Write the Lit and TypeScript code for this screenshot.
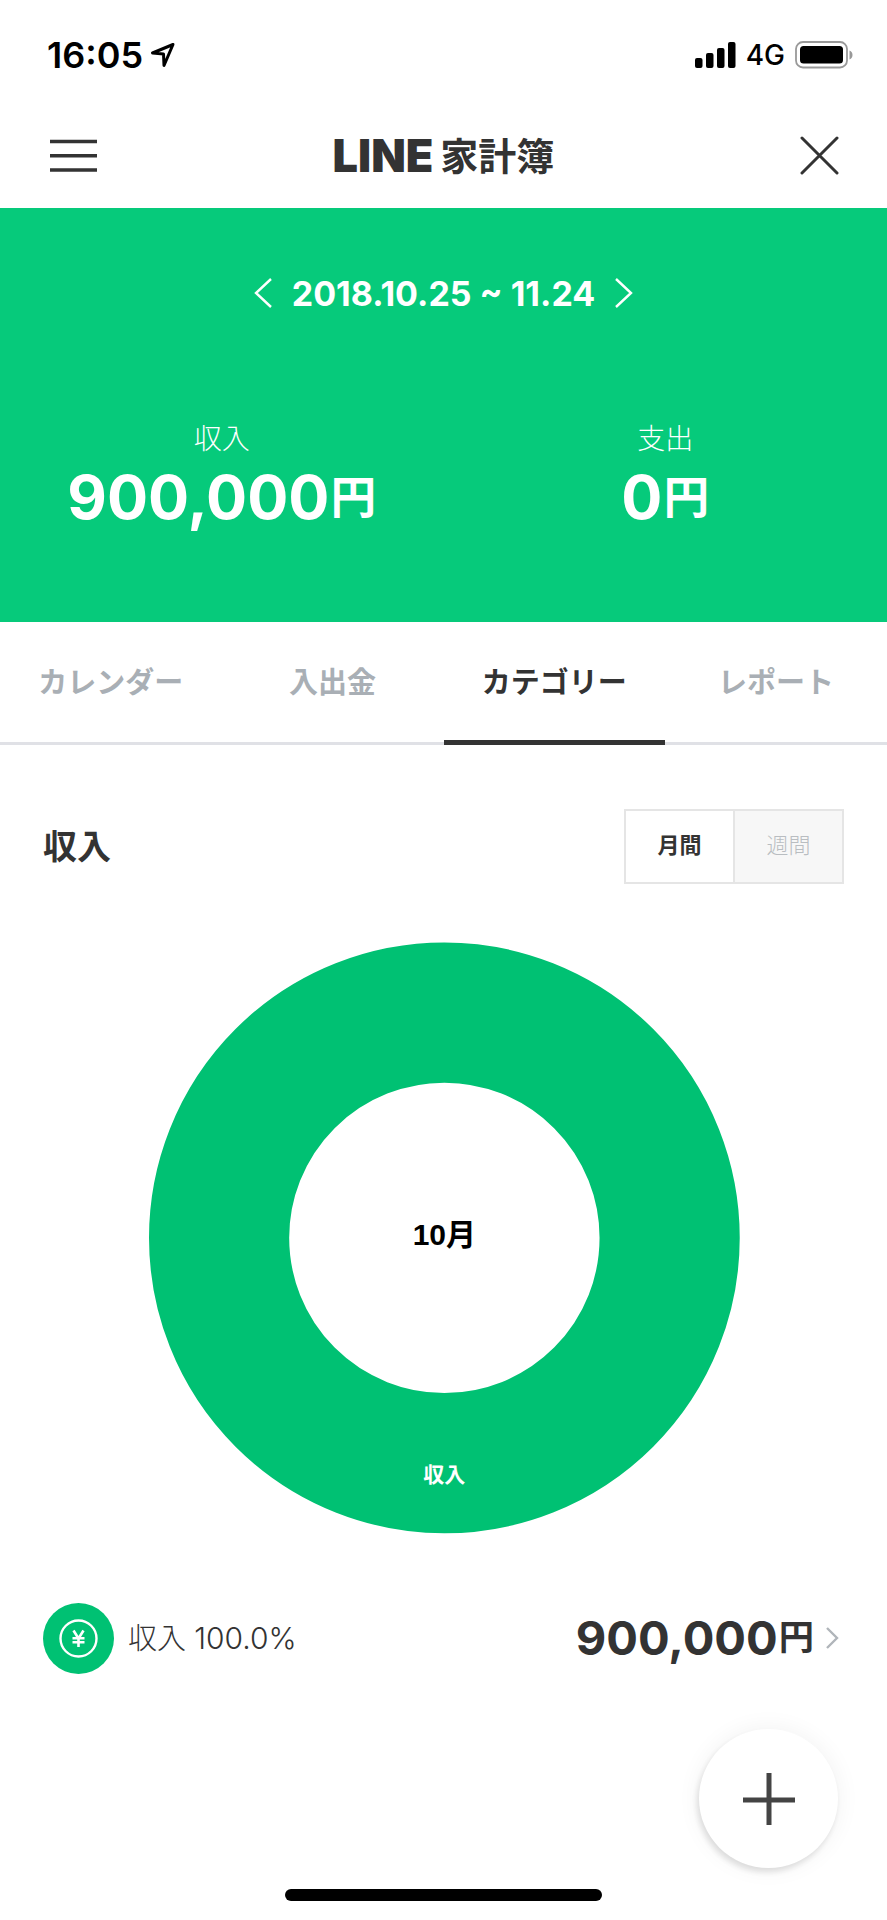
import { LitElement, html, css, svg } from "lit";
import { customElement, property, state } from "lit/decorators.js";
import { classMap } from "lit/directives/class-map.js";

const CHART_GREEN = "#00c173";

/** Amount of money with a smaller yen unit after it. */
@customElement("yen-amount")
export class YenAmount extends LitElement {
  @property({ type: Number }) value = 0;

  static styles = css`
    :host {
      display: block;
      white-space: nowrap;
    }
    .unit {
      margin-left: 1px;
      font-size: 0.75em;
      font-weight: 700;
      line-height: 1;
      vertical-align: 5px;
    }
  `;

  render() {
    return html`${this.value.toLocaleString("en-US")}<span class="unit">円</span>`;
  }
}

/** Ring chart of one month, with a single category filling it. */
@customElement("category-donut")
export class CategoryDonut extends LitElement {
  @property() month = "";
  @property() label = "";

  static styles = css`
    :host {
      display: block;
    }
    svg {
      display: block;
      width: 100%;
      height: auto;
    }
    .month {
      font: 700 30px "Liberation Sans", "Noto Sans CJK JP", sans-serif;
      fill: #000;
    }
    .label {
      font: 700 21px "Noto Sans CJK JP", sans-serif;
      fill: #fff;
    }
  `;

  render() {
    return html`<svg viewBox="0 0 592 592" role="img" aria-label=${this.month + " " + this.label}>
      ${svg`
        <circle cx="297" cy="295.500" r="225" fill="none" stroke=${CHART_GREEN} stroke-width="140"></circle>
        <text class="month" x="297" y="303" text-anchor="middle">${this.month}</text>
        <text class="label" x="297" y="539" text-anchor="middle">${this.label}</text>
      `}
    </svg>`;
  }
}

@customElement("app-root")
export class AppRoot extends LitElement {
  @state() private tab = "カテゴリー";
  @state() private span = "月間";

  private tabs = ["カレンダー", "入出金", "カテゴリー", "レポート"];
  private spans = ["月間", "週間"];

  static styles = css`
    :host {
      display: flex;
      flex-direction: column;
      position: relative;
      min-height: 100vh;
      box-sizing: border-box;
      background: #fff;
      color: #333;
      font-family: Inter, "Noto Sans CJK JP", sans-serif;
    }
    svg {
      display: block;
      flex: none;
    }
    button {
      margin: 0;
      padding: 0;
      border: 0;
      background: none;
      color: inherit;
      font: inherit;
      cursor: pointer;
    }
    h1,
    h2,
    dl,
    dd {
      margin: 0;
    }

    .status {
      display: flex;
      align-items: center;
      justify-content: space-between;
      height: 98px;
      padding: 6px 33px 0 47px;
      color: #000;
    }
    .clock {
      display: flex;
      align-items: center;
      gap: 7px;
      font-size: 36px;
      font-weight: 600;
    }
    .signals {
      display: flex;
      align-items: center;
      gap: 10px;
      font-size: 28px;
      font-weight: 500;
    }

    .bar {
      display: grid;
      grid-template-columns: 1fr auto 1fr;
      align-items: center;
      height: 104px;
      padding: 0 48px;
    }
    .logo {
      display: flex;
      align-items: center;
      gap: 7px;
      font-size: 38px;
      font-weight: 700;
      line-height: 48px;
    }
    .brand {
      font-size: 45px;
      font-weight: 900;
    }
    .close {
      justify-self: end;
    }
    .menu {
      justify-self: start;
    }

    .summary {
      background: #06ca7b;
      color: #fff;
      padding: 53px 0 85px;
    }
    .period {
      display: flex;
      align-items: center;
      justify-content: center;
      gap: 20px;
      height: 64px;
      font-size: 34px;
      font-weight: 700;
    }
    .totals {
      display: grid;
      grid-template-columns: 1fr 1fr;
      margin-top: 96px;
      text-align: center;
    }
    .totals dt {
      font-size: 28px;
      font-weight: 300;
      line-height: 36px;
    }
    .totals dd {
      font-size: 61px;
      font-weight: 700;
      line-height: 80px;
    }

    .tabs {
      display: grid;
      grid-template-columns: repeat(4, 1fr);
      height: 123px;
      box-shadow: inset 0 -3px #e0e1e6;
    }
    .tab {
      padding-bottom: 2px;
      border-bottom: 5px solid transparent;
      color: #a9afb5;
      font-size: 29px;
      font-weight: 700;
    }
    .tab.active {
      border-color: #333;
      color: #333;
    }

    .content {
      padding: 64px 43px 0;
    }
    .head {
      display: flex;
      align-items: center;
      justify-content: space-between;
    }
    .head h2 {
      font-size: 34px;
      font-weight: 700;
      line-height: 48px;
    }
    .toggle {
      display: grid;
      grid-template-columns: 1fr 1fr;
      gap: 2px;
      width: 216px;
      height: 71px;
      border: 2px solid #e5e5e5;
      background: #e5e5e5;
    }
    .span {
      padding-bottom: 8px;
      background: #f7f7f7;
      color: #b9bdc1;
      font-size: 22px;
      font-weight: 300;
    }
    .span.active {
      background: #fff;
      color: #333;
      font-weight: 700;
    }
    .chart {
      width: 74%;
      margin: 58px auto 0;
    }
    .row {
      display: flex;
      align-items: center;
      width: 100%;
      margin-top: 68px;
      padding-right: 5px;
      text-align: left;
    }
    .name {
      flex: 1;
      margin-left: 14px;
      padding-bottom: 4px;
      font-size: 29px;
      font-weight: 300;
    }
    .share {
      font-size: 30px;
    }
    .sum {
      margin-right: 12px;
      font-size: 47px;
      font-weight: 700;
      line-height: 64px;
    }

    .add {
      display: grid;
      place-items: center;
      position: fixed;
      right: 49px;
      bottom: 52px;
      width: 139px;
      height: 139px;
      border-radius: 50%;
      background: #fff;
      box-shadow: 0 0 24px rgba(0, 0, 0, 0.06), -2px 4px 6px rgba(0, 0, 0, 0.12);
    }
    .home {
      width: 317px;
      height: 12px;
      margin: auto auto 19px;
      border-radius: 6px;
      background: #000;
    }
  `;

  private chevron(width: number, height: number, dir: "left" | "right", color: string) {
    const points =
      dir === "left"
        ? `${width - 1},1 2,${height / 2} ${width - 1},${height - 1}`
        : `1,1 ${width - 2},${height / 2} 1,${height - 1}`;
    return html`<svg width=${width} height=${height} viewBox="0 0 ${width} ${height}" fill="none"
      stroke=${color} stroke-width="2.4" aria-hidden="true">
      <polyline points=${points}></polyline>
    </svg>`;
  }

  render() {
    return html`
      <div class="status">
        <div class="clock">
          <span>16:05</span>
          <svg width="25" height="26" viewBox="0 0 25 26" fill="none" stroke="#000"
            stroke-width="3" stroke-linejoin="round">
            <path d="M23 2.500 2.500 11 13.500 12 14 23.500Z"></path>
          </svg>
        </div>
        <div class="signals">
          <svg width="41" height="26" viewBox="0 0 41 26" fill="#000">
            <rect x="0" y="16" width="7.500" height="10" rx="2"></rect>
            <rect x="11" y="11" width="7.500" height="15" rx="2"></rect>
            <rect x="22" y="6" width="7.500" height="20" rx="2"></rect>
            <rect x="33" y="0" width="7.500" height="26" rx="2"></rect>
          </svg>
          <span>4G</span>
          <svg width="59" height="28" viewBox="0 0 59 28">
            <rect x="1" y="1" width="51" height="25.500" rx="7" fill="none" stroke="#999" stroke-width="1.800"></rect>
            <rect x="5" y="5" width="43" height="17.500" rx="3.500" fill="#000"></rect>
            <path d="M54.500 9.500c4 1.500 4 7.500 0 9Z" fill="#999"></path>
          </svg>
        </div>
      </div>

      <header class="bar">
        <button class="menu" aria-label="メニュー">
          <svg width="51" height="34" viewBox="0 0 51 34" stroke="#333" stroke-width="3.600">
            <path d="M2 2.500h47M2 16.700h47M2 31h47"></path>
          </svg>
        </button>
        <h1 class="logo"><span class="brand">LINE</span><span>家計簿</span></h1>
        <button class="close" aria-label="閉じる">
          <svg width="40" height="40" viewBox="0 0 40 40" stroke="#333" stroke-width="3" stroke-linecap="round">
            <path d="M3 2 38 37M38 2 3 37"></path>
          </svg>
        </button>
      </header>

      <section class="summary">
        <div class="period">
          <button aria-label="前の期間">${this.chevron(18, 30, "left", "#fff")}</button>
          <span>2018.10.25 ~ 11.24</span>
          <button aria-label="次の期間">${this.chevron(18, 30, "right", "#fff")}</button>
        </div>
        <div class="totals">
          <dl>
            <dt>収入</dt>
            <dd><yen-amount .value=${900000}></yen-amount></dd>
          </dl>
          <dl>
            <dt>支出</dt>
            <dd><yen-amount .value=${0}></yen-amount></dd>
          </dl>
        </div>
      </section>

      <nav class="tabs">
        ${this.tabs.map(
          (name) => html`<button
            class=${classMap({ tab: true, active: name === this.tab })}
            @click=${() => (this.tab = name)}
          >${name}</button>`
        )}
      </nav>

      <main class="content">
        <div class="head">
          <h2>収入</h2>
          <div class="toggle">
            ${this.spans.map(
              (name) => html`<button
                class=${classMap({ span: true, active: name === this.span })}
                aria-pressed=${name === this.span}
                @click=${() => (this.span = name)}
              >${name}</button>`
            )}
          </div>
        </div>

        <category-donut class="chart" month="10月" label="収入"></category-donut>

        <button class="row">
          <svg width="71" height="71" viewBox="0 0 71 71" fill="none" stroke="#fff" aria-hidden="true">
            <circle cx="35.500" cy="35.500" r="35.500" fill=${CHART_GREEN} stroke="none"></circle>
            <circle cx="35.500" cy="35.500" r="18" stroke-width="2.400"></circle>
            <path d="M30.500 27.500l5 8 5-8M29.500 35.200h12M29.500 39.200h12M35.500 35v9" stroke-width="2.600"></path>
          </svg>
          <span class="name">収入 <span class="share">100.0%</span></span>
          <yen-amount class="sum" .value=${900000}></yen-amount>
          ${this.chevron(13, 22, "right", "#b0b5ba")}
        </button>
      </main>

      <button class="add" aria-label="追加">
        <svg width="54" height="54" viewBox="0 0 54 54" stroke="#444" stroke-width="5">
          <path d="M27 1v52M1 28h52"></path>
        </svg>
      </button>
      <div class="home"></div>
    `;
  }
}
